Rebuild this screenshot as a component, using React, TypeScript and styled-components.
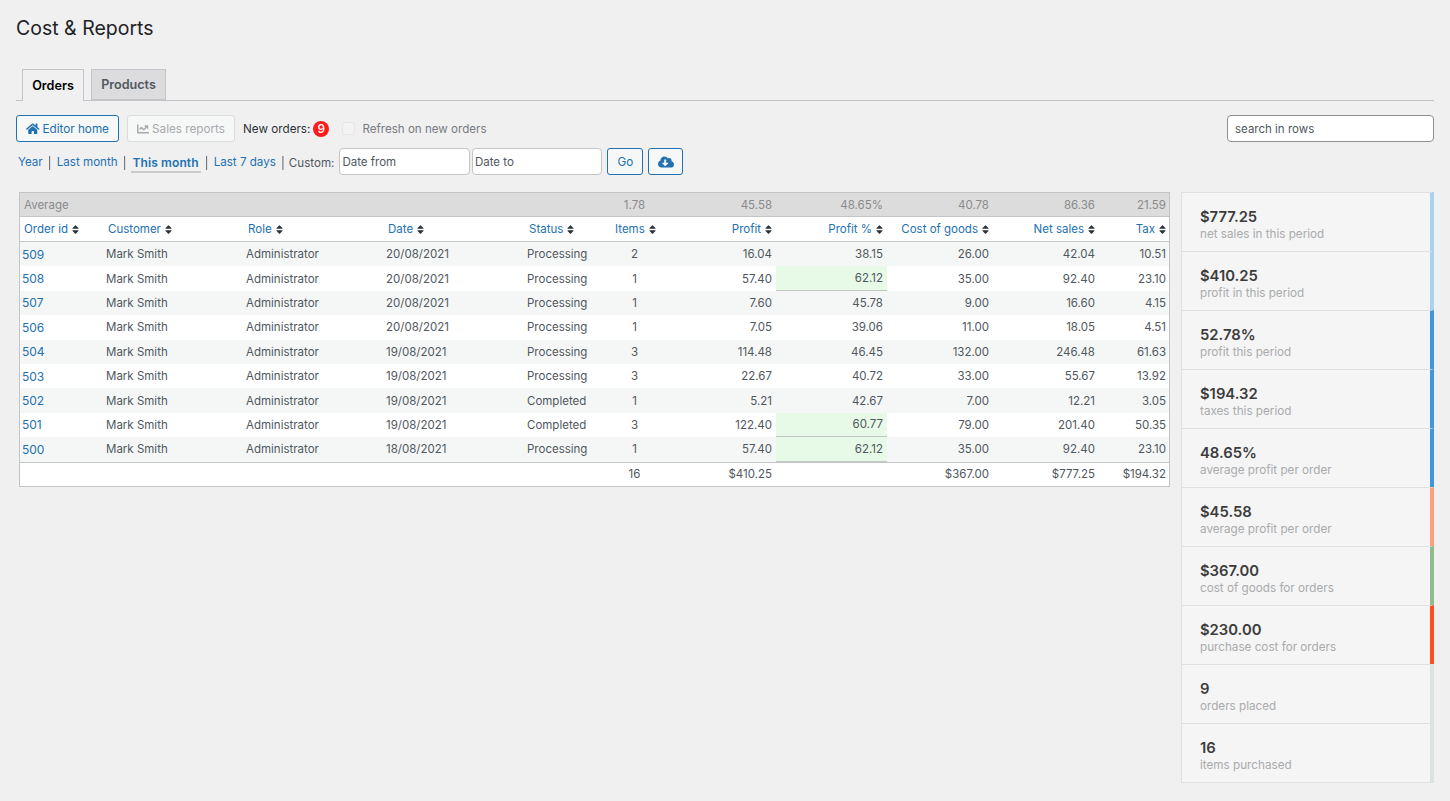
import React from "react";
import styled, { createGlobalStyle } from "styled-components";
import { FaHome, FaChartLine, FaCloudDownloadAlt, FaSort } from "react-icons/fa";

const Global = createGlobalStyle`
  html, body { margin: 0; padding: 0; background: #f0f0f1; }
  body { font-family: Inter, "Liberation Sans", sans-serif; font-size: 12px; color: #3c434a; -webkit-font-smoothing: antialiased; }
  * { box-sizing: border-box; }
`;

const Page = styled.div`
  width: 1450px;
  height: 801px;
  padding: 0 16px;
  overflow: hidden;
`;
const Title = styled.h1`
  margin: 0;
  padding-top: 15px;
  height: 69px;
  font-size: 19.5px;
  line-height: 26px;
  font-weight: 400;
  color: #1d2327;
`;
const TabBar = styled.div`
  display: flex;
  gap: 7px;
  padding-left: 6px;
  height: 32px;
  border-bottom: 1px solid #c3c4c7;
`;
const Tab = styled.div<{ $active?: boolean }>`
  height: ${(p) => (p.$active ? "32px" : "31px")};
  width: ${(p) => (p.$active ? "62px" : "75px")};
  display: flex;
  align-items: center;
  justify-content: center;
  border: 1px solid #c3c4c7;
  border-bottom: ${(p) => (p.$active ? "none" : "1px solid #c3c4c7")};
  background: ${(p) => (p.$active ? "#f0f0f1" : "#dcdcde")};
  color: ${(p) => (p.$active ? "#000" : "#50575e")};
  font-weight: 600;
  font-size: 12.6px;
`;
const Toolbar = styled.div`
  display: flex;
  align-items: center;
  height: 27px;
  margin-top: 14px;
  font-size: 11.7px;
`;
const Button = styled.button<{ $disabled?: boolean }>`
  height: 27px;
  padding: 0;
  display: inline-flex;
  align-items: center;
  justify-content: center;
  gap: 3px;
  font: inherit;
  font-size: 11.7px;
  border-radius: 3px;
  border: 1px solid ${(p) => (p.$disabled ? "#dcdcde" : "#2271b1")};
  background: #f6f7f7;
  color: ${(p) => (p.$disabled ? "#a7aaad" : "#2271b1")};
`;
const HomeButton = styled(Button)`
  width: 103px;
  svg { font-size: 13.5px; }
`;
const ReportsButton = styled(Button)`
  width: 108px;
  margin-left: 8px;
  svg { font-size: 12px; }
`;
const NewOrders = styled.span`
  margin-left: 8px;
  color: #2c3338;
`;
const Badge = styled.span`
  width: 16px;
  height: 16px;
  margin-left: 3px;
  border-radius: 50%;
  background: #fb1c1c;
  color: #fff;
  font-size: 12px;
  font-weight: 500;
  display: inline-flex;
  align-items: center;
  justify-content: center;
`;
const Check = styled.span`
  width: 13px;
  height: 13px;
  margin-left: 13px;
  border-radius: 3px;
  border: 1px solid #e6e6e7;
  background: #f3f3f4;
`;
const RefreshLabel = styled.span`
  margin-left: 7px;
  font-size: 11.6px;
  color: #787c82;
`;
const Search = styled.input`
  margin-left: auto;
  width: 207px;
  height: 27px;
  padding: 0 7px;
  border: 1px solid #8c8f94;
  border-radius: 4px;
  background: #fff;
  font: inherit;
  font-size: 11.5px;
  color: #2c3338;
  &::placeholder { color: #50575e; opacity: 1; }
`;
const RangeBar = styled.div`
  display: flex;
  align-items: center;
  height: 27px;
  margin-top: 6px;
  padding-left: 1px;
  font-size: 11.6px;
`;
const RangeLink = styled.a<{ $active?: boolean }>`
  color: #2271b1;
  font-weight: ${(p) => (p.$active ? 600 : 400)};
  font-size: ${(p) => (p.$active ? "12px" : "inherit")};
  letter-spacing: ${(p) => (p.$active ? "0.1px" : "0")};
  height: 27px;
  line-height: 29px;
  padding: 0 ${(p) => (p.$active ? "2px" : "1px")};
  position: relative;
  ${(p) => p.$active && `
    &::after {
      content: "";
      position: absolute;
      left: 0; right: 0; bottom: 2px;
      height: 2px;
      background: #c9cacc;
    }
  `}
`;
const Sep = styled.span`
  color: #50575e;
  width: 12px;
  text-align: center;
  margin-top: 2px;
  will-change: opacity;
`;
const Custom = styled.span`
  color: #50575e;
  margin-right: 5px;
  margin-top: 2px;
`;
const DateInput = styled.input`
  width: 130.5px;
  height: 27px;
  margin-right: 2px;
  padding: 0 2px;
  border: 1px solid #c3c4c7;
  border-radius: 4px;
  background: #fff;
  font: inherit;
  font-size: 11.5px;
  &::placeholder { color: #50575e; opacity: 1; }
`;
const GoButton = styled(Button)`
  width: 36px;
  margin-left: 3px;
`;
const CloudButton = styled(Button)`
  width: 35px;
  margin-left: 5px;
  svg { font-size: 16px; }
`;
const Main = styled.div`
  display: flex;
  align-items: flex-start;
  gap: 11px;
  margin-top: 17px;
  padding-left: 3px;
`;
const Table = styled.table`
  width: 1151px;
  table-layout: fixed;
  border-collapse: separate;
  border-spacing: 0;
  border: 1px solid #c3c4c7;
  background: #fff;
  font-size: 11.5px;
  td:last-child, th:last-child { padding-right: 3px; }
`;
const AvgRow = styled.tr`
  background: #dcdcdc;
  color: #8a8a8c;
  height: 24px;
`;
const AvgCell = styled.td<{ $align?: string }>`
  padding: 0 4px;
  text-align: ${(p) => p.$align || "right"};
  border-bottom: 1px solid #c3c4c7;
`;
const Head = styled.th<{ $align?: string }>`
  padding: 0 4px;
  height: 25px;
  font-weight: 400;
  color: #2271b1;
  text-align: ${(p) => p.$align || "left"};
  border-bottom: 1px solid #c3c4c7;
  white-space: nowrap;
  svg { width: 7px; height: 11px; color: #2c3338; margin-left: 4px; vertical-align: -1.5px; }
`;
const Row = styled.tr<{ $odd?: boolean }>`
  height: 24.4px;
  background: ${(p) => (p.$odd ? "#f5f7f6" : "#fff")};
`;
const Cell = styled.td<{ $align?: string }>`
  padding: 0 ${(p) => (p.$align === "left" ? "2px" : "4px")};
  text-align: ${(p) => p.$align || "right"};
  color: #50575e;
  white-space: nowrap;
`;
const HighCell = styled(Cell)`
  background: #e7fae7;
  border-bottom: 1px solid #c3c4c7;
`;
const OrderLink = styled.a`
  color: #2271b1;
  font-size: 12px;
`;
const FootRow = styled.tr`
  height: 24px;
`;
const FootCell = styled.td<{ $align?: string }>`
  padding: 0 4px;
  text-align: ${(p) => p.$align || "right"};
  color: #50575e;
  border-top: 1px solid #c3c4c7;
`;
const Side = styled.div`
  width: 253px;
  border-bottom: 1px solid #e0e0e0;
`;
const Stat = styled.div<{ $bar: string }>`
  height: 59px;
  padding: 15px 0 0 18px;
  background: #f5f5f5;
  border: 1px solid #e0e0e0;
  border-width: 1px 0 0 1px;
  border-right: 4px solid ${(p) => p.$bar};
`;
const StatValue = styled.div`
  font-size: 14.8px;
  line-height: 18px;
  font-weight: 600;
  color: #3c3c3c;
`;
const StatLabel = styled.div`
  font-size: 11.7px;
  line-height: 16px;
  color: #a9abad;
`;

const widths = [84, 140, 140, 141, 86, 47, 118, 111, 106, 106, 70];
const Col = styled.col<{ $w: number }>`
  width: ${(p) => p.$w}px;
`;

const rows = [
  ["509", "Mark Smith", "20/08/2021", "Processing", "2", "16.04", "38.15", "26.00", "42.04", "10.51"],
  ["508", "Mark Smith", "20/08/2021", "Processing", "1", "57.40", "62.12", "35.00", "92.40", "23.10"],
  ["507", "Mark Smith", "20/08/2021", "Processing", "1", "7.60", "45.78", "9.00", "16.60", "4.15"],
  ["506", "Mark Smith", "20/08/2021", "Processing", "1", "7.05", "39.06", "11.00", "18.05", "4.51"],
  ["504", "Mark Smith", "19/08/2021", "Processing", "3", "114.48", "46.45", "132.00", "246.48", "61.63"],
  ["503", "Mark Smith", "19/08/2021", "Processing", "3", "22.67", "40.72", "33.00", "55.67", "13.92"],
  ["502", "Mark Smith", "19/08/2021", "Completed", "1", "5.21", "42.67", "7.00", "12.21", "3.05"],
  ["501", "Mark Smith", "19/08/2021", "Completed", "3", "122.40", "60.77", "79.00", "201.40", "50.35"],
  ["500", "Mark Smith", "18/08/2021", "Processing", "1", "57.40", "62.12", "35.00", "92.40", "23.10"],
];

const heads: [string, string][] = [
  ["Order id", "left"], ["Customer", "left"], ["Role", "left"], ["Date", "left"], ["Status", "left"],
  ["Items", "center"], ["Profit", "right"], ["Profit %", "right"], ["Cost of goods", "right"], ["Net sales", "right"], ["Tax", "right"],
];

const stats: [string, string, string][] = [
  ["$777.25", "net sales in this period", "#a8d2ef"],
  ["$410.25", "profit in this period", "#a8d2ef"],
  ["52.78%", "profit this period", "#3d97da"],
  ["$194.32", "taxes this period", "#3d97da"],
  ["48.65%", "average profit per order", "#3d97da"],
  ["$45.58", "average profit per order", "#ffa07a"],
  ["$367.00", "cost of goods for orders", "#8fbc8f"],
  ["$230.00", "purchase cost for orders", "#ff4f1f"],
  ["9", "orders placed", "#dde2e3"],
  ["16", "items purchased", "#dde2e3"],
];

export default function App() {
  return (
    <Page>
      <Global />
      <Title>Cost &amp; Reports</Title>
      <TabBar>
        <Tab $active>Orders</Tab>
        <Tab>Products</Tab>
      </TabBar>
      <Toolbar>
        <HomeButton><FaHome /> Editor home</HomeButton>
        <ReportsButton $disabled><FaChartLine /> Sales reports</ReportsButton>
        <NewOrders>New orders:</NewOrders>
        <Badge>9</Badge>
        <Check />
        <RefreshLabel>Refresh on new orders</RefreshLabel>
        <Search placeholder="search in rows" />
      </Toolbar>
      <RangeBar>
        <RangeLink>Year</RangeLink>
        <Sep>|</Sep>
        <RangeLink>Last month</RangeLink>
        <Sep>|</Sep>
        <RangeLink $active>This month</RangeLink>
        <Sep>|</Sep>
        <RangeLink>Last 7 days</RangeLink>
        <Sep>|</Sep>
        <Custom>Custom:</Custom>
        <DateInput placeholder="Date from" />
        <DateInput placeholder="Date to" />
        <GoButton>Go</GoButton>
        <CloudButton><FaCloudDownloadAlt /></CloudButton>
      </RangeBar>
      <Main>
        <Table>
          <colgroup>
            {widths.map((w, i) => <Col key={i} $w={w} />)}
          </colgroup>
          <thead>
            <AvgRow>
              <AvgCell $align="left" colSpan={5}>Average</AvgCell>
              <AvgCell $align="center">1.78</AvgCell>
              <AvgCell>45.58</AvgCell>
              <AvgCell>48.65%</AvgCell>
              <AvgCell>40.78</AvgCell>
              <AvgCell>86.36</AvgCell>
              <AvgCell>21.59</AvgCell>
            </AvgRow>
            <tr>
              {heads.map(([h, a]) => (
                <Head key={h} $align={a}>{h}<FaSort /></Head>
              ))}
            </tr>
          </thead>
          <tbody>
            {rows.map((r, i) => {
              const high = parseFloat(r[6]) > 60;
              const Pct = high ? HighCell : Cell;
              return (
                <Row key={r[0]} $odd={i % 2 === 0}>
                  <Cell $align="left"><OrderLink>{r[0]}</OrderLink></Cell>
                  <Cell $align="left">{r[1]}</Cell>
                  <Cell $align="left">Administrator</Cell>
                  <Cell $align="left">{r[2]}</Cell>
                  <Cell $align="left">{r[3]}</Cell>
                  <Cell $align="center">{r[4]}</Cell>
                  <Cell>{r[5]}</Cell>
                  <Pct>{r[6]}</Pct>
                  <Cell>{r[7]}</Cell>
                  <Cell>{r[8]}</Cell>
                  <Cell>{r[9]}</Cell>
                </Row>
              );
            })}
          </tbody>
          <tfoot>
            <FootRow>
              <FootCell colSpan={5} />
              <FootCell $align="center">16</FootCell>
              <FootCell>$410.25</FootCell>
              <FootCell />
              <FootCell>$367.00</FootCell>
              <FootCell>$777.25</FootCell>
              <FootCell>$194.32</FootCell>
            </FootRow>
          </tfoot>
        </Table>
        <Side>
          {stats.map(([v, l, c], i) => (
            <Stat key={i} $bar={c}>
              <StatValue>{v}</StatValue>
              <StatLabel>{l}</StatLabel>
            </Stat>
          ))}
        </Side>
      </Main>
    </Page>
  );
}
